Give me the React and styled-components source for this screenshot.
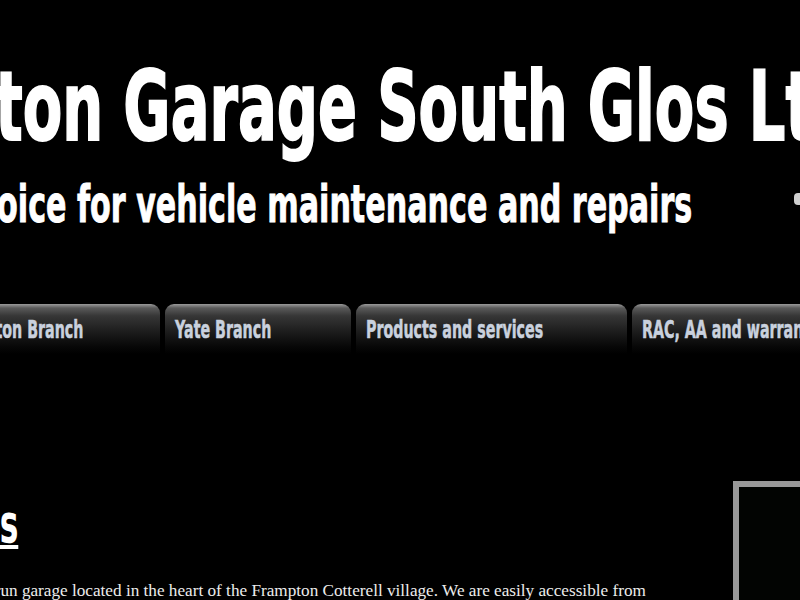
import React from 'react'
import styled, { createGlobalStyle } from 'styled-components'

const GlobalStyle = createGlobalStyle`
  html, body {
    margin: 0;
    padding: 0;
    background: #000;
    overflow: hidden;
  }
`

// the site is wider than the window and centred, so both edges fall off screen
const Page = styled.div`
  width: 1218px;
  margin-left: calc(50% - 609px);
  color: #fff;
`

const Header = styled.header`
  display: flex;
  align-items: flex-start;
  justify-content: space-between;
  padding-top: 52px;
`

const Titles = styled.div`
  display: flex;
  flex-direction: column;
  flex: 1;
  min-width: 0;
`

const Title = styled.h1`
  margin: 0;
  font-family: "DejaVu Sans", sans-serif;
  font-weight: 700;
  font-size: 96px;
  line-height: 110px;
  white-space: nowrap;
  -webkit-text-stroke: 2px #fff;
  transform: scaleX(0.6);
  transform-origin: left center;
`

const Tagline = styled.h2`
  margin: 12px 0 0 0;
  font-family: "DejaVu Sans", sans-serif;
  font-weight: 700;
  font-size: 52px;
  line-height: 60px;
  white-space: nowrap;
  -webkit-text-stroke: 1px #fff;
  transform: scaleX(0.58);
  transform-origin: left center;
`

const Badge = styled.div`
  flex: none;
  margin-top: 141px;
  width: 215px;
  height: 12px;
  border-radius: 4px;
  background: #cfcfcf;
`

const Nav = styled.nav`
  display: flex;
  gap: 5px;
  margin-top: 70px;
  padding-left: 144px;
`

const Tab = styled.a`
  display: block;
  flex: none;
  width: ${(p) => p.$w}px;
  height: 50px;
  padding: 11px 0 0 10px;
  box-sizing: border-box;
  border-radius: 9px 9px 0 0;
  background: linear-gradient(to bottom, #9a9a9a 0px, #5a5a5a 4px, #363636 12px, #1c1c1c 28px, #080808 42px, #000 50px);
  text-decoration: none;
  overflow: hidden;
`

const TabLabel = styled.span`
  display: inline-block;
  font-family: "DejaVu Sans", sans-serif;
  font-weight: 700;
  font-size: 25px;
  line-height: 30px;
  color: #c9d1de;
  white-space: nowrap;
  -webkit-text-stroke: 0.6px #c9d1de;
  transform: scaleX(0.57);
  transform-origin: left center;
`

const Main = styled.main`
  display: flex;
  gap: 73px;
  margin-top: 127px;
  padding-left: 49px;
`

const Content = styled.section`
  width: 820px;
  flex: none;
  padding-top: 11px;
`

const Heading = styled.h3`
  margin: 0 0 0 21px;
  font-family: "DejaVu Sans", sans-serif;
  font-weight: 700;
  font-size: 54px;
  line-height: 64px;
  white-space: nowrap;
  text-decoration: underline;
  text-decoration-thickness: 4px;
  text-underline-offset: 3px;
  transform: scaleX(0.58);
  transform-origin: left center;
`

const Text = styled.p`
  margin: 22px 0 0 0;
  font-family: "Liberation Serif", serif;
  font-size: 17.2px;
  line-height: 26px;
  color: #ececec;
`

const Sidebar = styled.aside`
  flex: none;
  width: 270px;
  height: 300px;
  box-sizing: border-box;
  border: 6px solid #999;
  background: #020402;
`

const tabs = [
  { label: 'Frampton Branch', w: 225 },
  { label: 'Yate Branch', w: 186 },
  { label: 'Products and services', w: 271 },
  { label: 'RAC, AA and warranty work', w: 300 },
]

export default function App() {
  return (
    <>
      <GlobalStyle />
      <Page>
        <Header>
          <Titles>
            <Title>Frampton Garage South Glos Ltd</Title>
            <Tagline>Your first choice for vehicle maintenance and repairs</Tagline>
          </Titles>
          <Badge />
        </Header>
        <Nav>
          {tabs.map((t) => (
            <Tab key={t.label} href="#" $w={t.w}>
              <TabLabel>{t.label}</TabLabel>
            </Tab>
          ))}
        </Nav>
        <Main>
          <Content>
            <Heading>About us</Heading>
            <Text>
              We are a small family run garage located in the heart of the Frampton Cotterell village. We are easily accessible from
              the Ring Road and offer a friendly, reliable service to all our customers.
            </Text>
          </Content>
          <Sidebar />
        </Main>
      </Page>
    </>
  )
}
